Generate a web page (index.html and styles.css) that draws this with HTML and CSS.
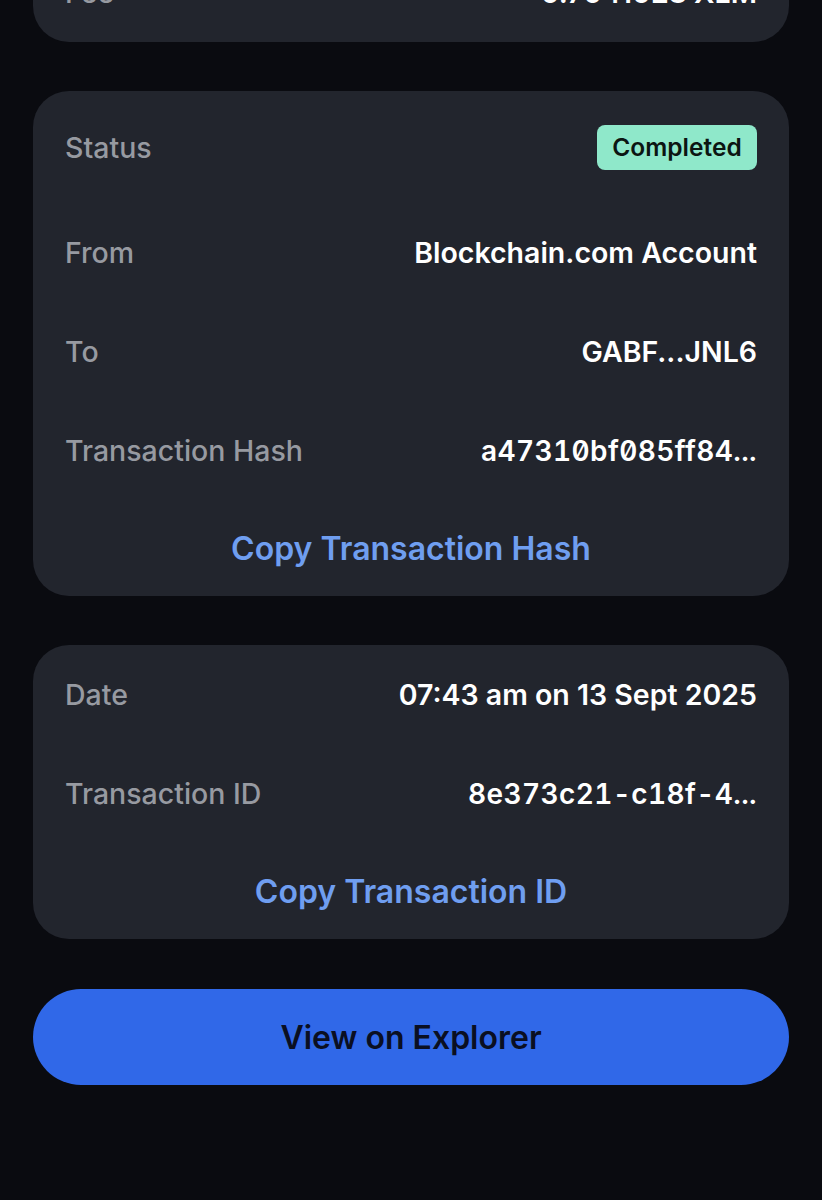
FILE: index.html
```html
<!DOCTYPE html>
<html lang="en">
<head>
<meta charset="utf-8">
<title>Transaction details</title>
<link rel="stylesheet" href="styles.css">
</head>
<body>
<main class="page">
  <section class="card card-top">
    <div class="row">
      <span class="label">Fee</span>
      <span class="value">0.7041028 XLM</span>
    </div>
  </section>

  <section class="card">
    <div class="row row-status">
      <span class="label">Status</span>
      <span class="badge">Completed</span>
    </div>
    <div class="row">
      <span class="label">From</span>
      <span class="value">Blockchain.com Account</span>
    </div>
    <div class="row">
      <span class="label">To</span>
      <span class="value">GABF...JNL6</span>
    </div>
    <div class="row">
      <span class="label">Transaction Hash</span>
      <span class="value mono">a47310bf085ff84...</span>
    </div>
    <div class="row row-link">
      <span class="link">Copy Transaction Hash</span>
    </div>
  </section>

  <section class="card">
    <div class="row">
      <span class="label">Date</span>
      <span class="value">07:43 am on 13 Sept 2025</span>
    </div>
    <div class="row">
      <span class="label">Transaction ID</span>
      <span class="value mono">8e373c21-c18f-4...</span>
    </div>
    <div class="row row-link">
      <span class="link">Copy Transaction ID</span>
    </div>
  </section>

  <button class="btn" type="button">View on Explorer</button>
</main>
</body>
</html>
```

FILE: styles.css
```css
* { box-sizing: border-box; }
html, body {
  margin: 0;
  padding: 0;
  background: #0a0b10;
  height: 100%;
  overflow: hidden;
}
body {
  font-family: Inter, "Noto Sans", sans-serif;
  color: #ffffff;
}
.page {
  display: flex;
  flex-direction: column;
  gap: 49px;
  padding: 0 33px;
}
.card {
  background: #22252d;
  border-radius: 36px;
  padding: 0 32px;
  display: flex;
  flex-direction: column;
}
.card-top {
  margin-top: -57px;
  border-radius: 0 0 36px 36px;
}
.row {
  height: 99px;
  display: flex;
  align-items: center;
  justify-content: space-between;
}
.row-status {
  height: 112px;
}
.row-link {
  height: 96px;
  justify-content: center;
}
.label {
  font-size: 28.5px;
  font-weight: 500;
  color: #979aa1;
}
.value {
  font-size: 28.5px;
  font-weight: 600;
  color: #ffffff;
}
.mono {
  font-size: 28px;
  font-feature-settings: "tnum" 1, "zero" 1;
  letter-spacing: 0.4px;
}
.badge {
  background: #8fe8ca;
  color: #0c1512;
  font-size: 24.5px;
  font-weight: 600;
  height: 45px;
  width: 160px;
  border-radius: 8px;
  display: flex;
  align-items: center;
  justify-content: center;
}
.link {
  font-size: 32px;
  font-weight: 600;
  color: #6f9ef0;
}
.btn {
  margin-top: 1px;
  height: 96px;
  border: none;
  border-radius: 48px;
  background: #3068e8;
  color: #0a0f22;
  font-family: Inter, "Noto Sans", sans-serif;
  font-size: 32px;
  font-weight: 600;
  width: 100%;
}
```
